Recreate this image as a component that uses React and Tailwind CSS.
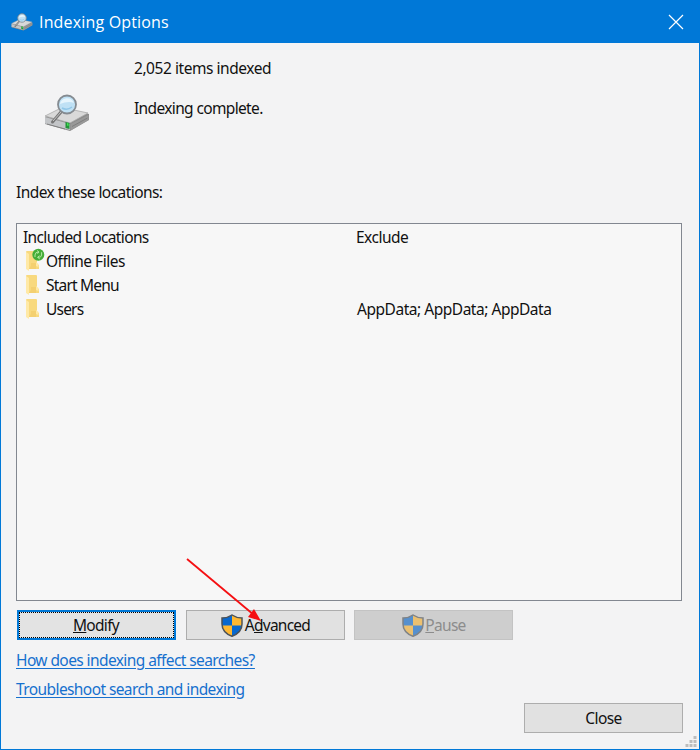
import clsx from 'clsx';

const locations = [
  { name: 'Offline Files', exclude: '', synced: true },
  { name: 'Start Menu', exclude: '', tight: true },
  { name: 'Users', exclude: 'AppData; AppData; AppData', tight: true },
];

function DriveIcon({ className }) {
  return (
    <svg viewBox="0 0 46 38" className={className}>
      <path d="M1 23 L19 14 L45 20 V26 L26 37 L1 30 Z" fill="#8b8b8b" />
      <path d="M1 22 L18 13.500 L44 19 L26 29 Z" fill="#d9d9d9" stroke="#a9a9a9" strokeWidth="0.8" />
      <path d="M1 23 L26 30 V36 L1 29.500 Z" fill="#c3c5c8" />
      <path d="M26.500 30 L44.500 21 V26 L26.500 36.500 Z" fill="#999" />
      <path d="M28 32.500 L43.500 24 M3 30 L21 35" stroke="#777" strokeWidth="0.8" />
      <path d="M21.500 28 L25.500 29 V35 L21.500 34 Z" fill="#23963a" />
      <path d="M23 29 L24.500 29.500 V32 L23 31.500 Z" fill="#45e552" />
      <path d="M17 18 L8.500 28" stroke="#777" strokeWidth="3" strokeLinecap="round" />
      <path d="M17 18 L9 27" stroke="#c5c5c5" strokeWidth="1" />
      <circle cx="23" cy="10.500" r="9" fill="#bfe1f5" stroke="#858b91" strokeWidth="1.800" />
      <path d="M16 10 C17 3 28 2 30 9 C26 7 21 8 16 10" fill="#e6f5fd" />
      <path d="M18 14 Q23 17 28 13" stroke="#91c7e8" strokeWidth="1.500" fill="none" />
    </svg>
  );
}

function Folder({ synced }) {
  return (
    <svg viewBox="0 0 22 24" className="h-6 w-[22px] shrink-0 overflow-visible">
      <path d="M2 3 Q2 2 3 2 H12 Q13 2 13 3 V15 L15 16 V20 H5 L2 19 Z" fill="#f8d97e" />
      <path d="M2 3 L5 5 V22 L2 20 Z" fill="#ffe9a6" />
      <path d="M5 20 L7 17 V14 H12 V20 Z" fill="#f4d070" />
      <path d="M12 13 L14.500 15 V18 L12 17 Z" fill="#ffe9a5" />
      {synced && (
        <g>
          <circle cx="14.300" cy="5.700" r="6" fill="#45ad38" />
          <path d="M11 8 V6 Q11 3 14.600 3 M13 1.500 L15 3 L13.500 4.700 M17.600 3.200 V6 Q17.600 8.400 14 8.400 M15.800 9.900 L13.500 8.400 L15.500 6.700" fill="none" stroke="#b2e9a0" strokeWidth="1" />
        </g>
      )}
    </svg>
  );
}

function Shield({ faded }) {
  return (
    <svg viewBox="0 0 22 23" className={clsx('h-[23px] w-[22px] shrink-0', faded && 'opacity-60')}>
      <path d="M11 1 C8 3 4.500 4 1 4 V10 C1 16 5 20 11 22.300 Z" fill="#0868cf" />
      <path d="M11 1 C14 3 17.500 4 21 4 V10 C21 16 17 20 11 22.300 Z" fill="#0868cf" />
      <path d="M11 1 C14 3 17.500 4 21 4 V11.500 H11 Z M1 11.500 H11 V22.300 C5 20 1.500 16 1 11.500" fill="#ffb832" />
      <path d="M11 1 C8 3 4.500 4 1 4 V10 C1 16 5 20 11 22.300 C17 20 21 16 21 10 V4 C17.500 4 14 3 11 1 Z" fill="none" stroke="#4d5257" strokeWidth="1.500" />
    </svg>
  );
}

function DialogButton({ children, className }) {
  return (
    <button
      type="button"
      className={clsx('flex h-[30px] w-[159px] items-center justify-center', className || 'border border-[#adadad] bg-[#e1e1e1]')}
    >
      {children}
    </button>
  );
}

export default function App() {
  return (
    <div className="relative flex h-[750px] w-[700px] flex-col overflow-hidden border border-[#0078d7] bg-[#f3f3f4] font-['Noto_Sans',sans-serif] text-[15.5px] leading-6 tracking-[-0.59px] whitespace-nowrap text-[#111]">
      <header className="flex h-[42px] shrink-0 items-center bg-[#0078d7] pl-[10px] text-white">
        <DriveIcon className="h-[18px] w-[22px]" />
        <h1 className="ml-[6px] font-['Open_Sans',sans-serif] text-[16px] tracking-[0.17px]">Indexing Options</h1>
        <svg viewBox="0 0 16 16" className="mr-[15px] ml-auto size-4">
          <path d="M1 1 L15 15 M15 1 L1 15" stroke="white" strokeWidth="1.200" />
        </svg>
      </header>

      <main className="flex flex-1 flex-col pr-[17px] pl-[15px]">
        <section className="flex h-[137px] pt-[13px]">
          <DriveIcon className="mt-[38px] ml-[28px] h-[38px] w-[46px]" />
          <div className="ml-[44px] flex flex-col gap-4">
            <p className="tracking-[-0.45px]">2,052 items indexed</p>
            <p className="tracking-[-0.64px]">Indexing complete.</p>
          </div>
        </section>
        <p className="tracking-[-0.56px]">Index these locations:</p>

        <section className="mt-[19px] h-[378px] border border-[#828790] bg-[#f7f7f7] pt-px">
          <div className="grid grid-cols-[333px_1fr] pl-[6px]">
            <span className="tracking-[-0.65px]">Included Locations</span>
            <span className="tracking-[-0.5px]">Exclude</span>
          </div>
          {locations.map((location) => (
            <div key={location.name} className="grid h-[23.8px] grid-cols-[333px_1fr] pl-[7px]">
              <span className={clsx('flex', location.tight ? 'tracking-[-0.8px]' : 'tracking-[-0.5px]')}>
                <Folder synced={location.synced} />
                {location.name}
              </span>
              <span className="tracking-[-0.47px]">{location.exclude}</span>
            </div>
          ))}
        </section>

        <div className="mt-[9px] flex gap-[9px] pl-px">
          <DialogButton className="mr-px border-2 border-[#0078d7] bg-[#e3e3e3] pr-px outline-1 -outline-offset-3 outline-dotted outline-black">
            <span className="tracking-[-0.7px]"><u>M</u>odify</span>
          </DialogButton>
          <DialogButton>
            <Shield />
            <span className="ml-[2px] tracking-[-0.75px]">A<u>d</u>vanced</span>
          </DialogButton>
          <DialogButton className="border border-[#c3c3c3] bg-[#cecece] pl-px text-[#8c8c8c]">
            <Shield faded />
            <span className="ml-px tracking-[-0.7px]"><u>P</u>ause</span>
          </DialogButton>
        </div>

        <nav className="mt-2 flex flex-col items-start gap-[5px] text-[#1670ce] underline underline-offset-2">
          <a href="#searches">How does indexing affect searches?</a>
          <a href="#troubleshoot">Troubleshoot search and indexing</a>
        </nav>
        <div className="-mr-px mt-[2px] flex justify-end">
          <DialogButton>Close</DialogButton>
        </div>
      </main>

      <svg viewBox="0 0 12 12" className="absolute right-[2px] bottom-px size-3">
        <path d="M8.500 0h3v3h-3z M4.500 4h3v3h-3z M8.500 4h3v3h-3z M0.500 8h3v3h-3z M4.500 8h3v3h-3z M8.500 8h3v3h-3z" fill="#bdbdbd" />
      </svg>
      <svg viewBox="0 0 80 70" className="pointer-events-none absolute top-[554px] left-[183px] h-[70px] w-20">
        <path d="M3 4 L70 60" stroke="#f50f12" strokeWidth="1.800" />
        <path d="M77 66 L64 62 L70 54 Z" fill="#f50f12" />
      </svg>
    </div>
  );
}
